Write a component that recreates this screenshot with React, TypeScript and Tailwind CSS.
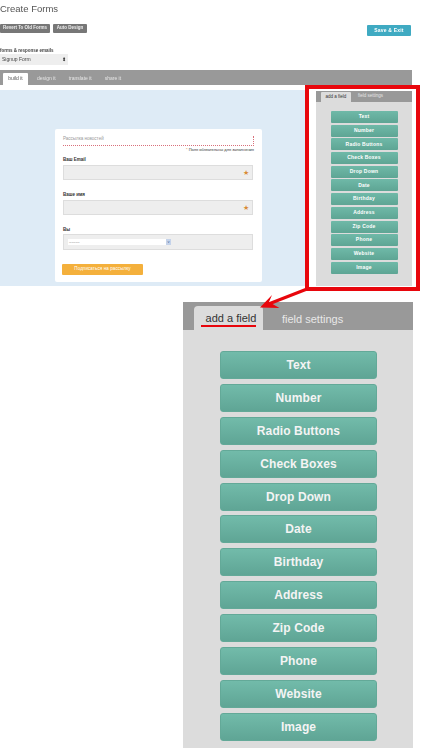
const fields = ["Text", "Number", "Radio Buttons", "Check Boxes", "Drop Down", "Date", "Birthday", "Address", "Zip Code", "Phone", "Website", "Image"];

function Star() {
  return <span className="absolute right-[3px] top-[2px] text-[7px] leading-[10px] text-[#d98a35]">★</span>;
}

function SmallPanel() {
  return (
    <div className="h-[195px] w-[96px] bg-[#dcdcdc]">
      <div className="flex h-[11px] bg-[#999999] pl-[5px] text-[4.5px]">
        <div className="mt-[1px] flex w-[30px] items-center justify-center rounded-t-[1px] bg-[#dcdcdc] text-[#333]">add a field</div>
        <div className="flex items-center pl-[7px] text-[#e5e5e5]">field settings</div>
      </div>
      <div className="flex flex-col items-center gap-[1.7px] pt-[9px]">
        {fields.map((f) => (
          <div key={f} className="flex h-[12px] w-[67px] items-center justify-center rounded-[1px] bg-gradient-to-b from-[#6fb9a8] to-[#5ea594] text-[5px] font-bold tracking-[0.2px] text-white">
            {f}
          </div>
        ))}
      </div>
    </div>
  );
}

function FormCard() {
  return (
    <div className="ml-[55px] mt-[39px] h-[153px] w-[207px] rounded-[2px] bg-white px-[8px] pt-[7px] text-[4.5px] text-[#333]">
      <div className="w-[191px] border-b border-r border-dotted border-[#d9707a] pb-[2px] text-[#999]">
        Рассылка новостей
      </div>
      <div className="flex w-[191px] justify-end pt-[1px] text-[4px]">
        <span className="text-[#d98a35]">*</span>&nbsp;Поля обязательны для заполнения
      </div>
      <div className="mt-[4px] text-[4.5px] font-bold leading-[6px]">Ваш Email</div>
      <div className="relative mt-[2px] h-[15px] w-[190px] border border-[#ddd] bg-[#eeeeee]"><Star /></div>
      <div className="mt-[12px] text-[4.5px] font-bold leading-[6px]">Ваше имя</div>
      <div className="relative mt-[2px] h-[15px] w-[190px] border border-[#ddd] bg-[#eeeeee]"><Star /></div>
      <div className="mt-[12px] text-[4.5px] font-bold leading-[6px]">Вы</div>
      <div className="mt-[1px] flex h-[16px] w-[190px] items-center border border-[#ddd] bg-[#eeeeee] pl-[4px]">
        <div className="flex h-[6px] w-[103px] items-center justify-between bg-white pl-[1px] text-[4px] leading-[6px]">
          --------
          <span className="h-[6px] w-[5px] bg-[#c5d3ea] text-center text-[4px] leading-[5px] text-[#44619a]">v</span>
        </div>
      </div>
      <div className="-ml-[1px] mt-[14px] flex h-[11px] w-[81px] items-center justify-center rounded-[1px] bg-[#f4b03c] text-[4.5px] tracking-[0.1px] text-white">
        Подписаться на рассылку
      </div>
    </div>
  );
}

export default function App() {
  return (
    <div className="relative h-[755px] w-[424px] overflow-hidden bg-white font-['Liberation_Sans',Arial,sans-serif]">
      <div className="blur-[0.4px]">
        <h1 className="pt-[3px] text-[9.5px] leading-[12px] font-normal text-[#555]">Create Forms</h1>
        <div className="mt-[9px] flex w-[411px] items-start justify-between">
          <div className="flex gap-[3px] text-[4.5px] font-bold text-[#eee]">
            <div className="flex h-[9px] w-[50px] items-center justify-center rounded-[1px] bg-[#777]">Revert To Old Forms</div>
            <div className="flex h-[9px] w-[34px] items-center justify-center rounded-[1px] bg-[#777]">Auto Design</div>
          </div>
          <div className="mt-[1px] flex h-[11px] w-[44px] items-center justify-center rounded-[1px] bg-[#3faac2] text-[5px] font-bold tracking-[0.2px] text-white">Save &amp; Exit</div>
        </div>
        <div className="mt-[11px] text-[4.5px] leading-[7px] font-bold text-[#444]">forms &amp; response emails</div>
        <div className="flex h-[11px] w-[68px] items-center justify-between bg-[#eeeeee] pl-[2px] pr-[2px] text-[5px] text-[#444]">
          Signup Form
          <span className="text-[5px] leading-[5px] text-[#222]">⬍</span>
        </div>
        <div className="mt-[5px] flex h-[15px] w-[412px] bg-[#999999] pl-[3px] text-[5px]">
          <div className="mt-[3px] flex w-[25px] items-center justify-center rounded-t-[1px] bg-white text-[#555]">build it</div>
          <div className="ml-[9px] mt-[3px] flex items-center text-[#e5e5e5]">design it</div>
          <div className="ml-[13px] mt-[3px] flex items-center text-[#e5e5e5]">translate it</div>
          <div className="ml-[13px] mt-[3px] flex items-center text-[#e5e5e5]">share it</div>
        </div>
        <div className="flex w-[420px] items-start">
          <div className="mt-[5px] h-[196px] w-[305px] overflow-hidden bg-[#deebf6]">
            <FormCard />
          </div>
          <div className="h-[206px] w-[115px] border-4 border-[#e8060c] pl-[7px] pt-[2px]">
            <SmallPanel />
          </div>
        </div>
      </div>

      <div className="ml-[183px] mt-[11px] h-[446px] w-[230px] bg-[#dcdcdc]">
        <div className="flex h-[28px] bg-[#999999] pl-[11px] text-[11px]">
          <div className="mt-[4px] flex w-[69px] flex-col items-center rounded-t-[4px] bg-[#dcdcdc] pl-[5px] pt-[5px] text-[#333]">
            <span className="leading-[14px]">add a field</span>
            <span className="-ml-[5px] h-[2px] w-[55px] bg-[#e8060c]" />
          </div>
          <div className="flex items-center pl-[19px] pt-[7px] text-[#e8e8e8]">field settings</div>
        </div>
        <div className="flex flex-col items-center gap-[4.9px] pt-[21px]">
          {fields.map((f) => (
            <div key={f} className="flex h-[28px] w-[157px] items-center justify-center rounded-[3px] border border-[#63a998] bg-gradient-to-b from-[#72bbaa] to-[#5fa595] pl-[1px] text-[12px] font-bold tracking-[0.1px] text-[#f4f4f4]">
              {f}
            </div>
          ))}
        </div>
      </div>

      {/* arrow from the red box down to the tab */}
      <svg className="absolute left-0 top-0" width="424" height="755" fill="none">
        <path d="M307 289 L266 305" stroke="#e8060c" strokeWidth="3" />
        <path d="M260 307.500 L272 295 L269 302 L279.500 308 Z" fill="#e8060c" />
      </svg>
    </div>
  );
}
